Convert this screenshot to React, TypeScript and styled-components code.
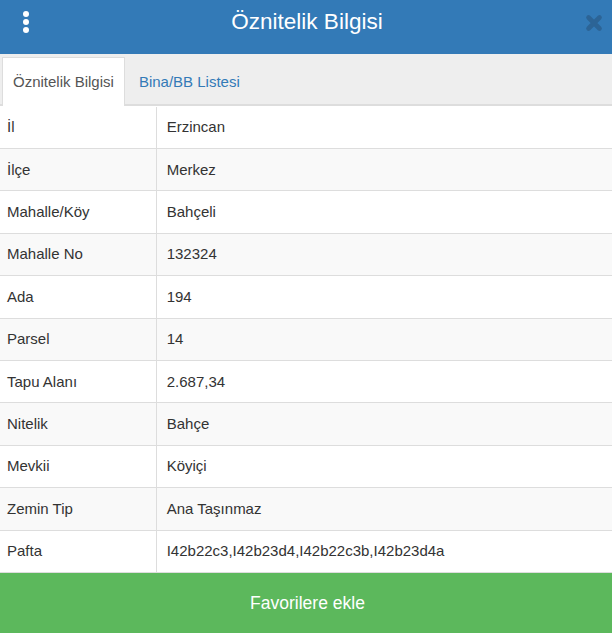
import React from "react";
import styled, { createGlobalStyle } from "styled-components";

const Global = createGlobalStyle`
  html, body { margin: 0; padding: 0; background: #fff; }
  body { font-family: "Liberation Sans", Arial, sans-serif; font-size: 15px; color: #333; overflow: hidden; }
  * { box-sizing: border-box; }
`;

const Page = styled.div`
  width: 612px;
  height: 633px;
  display: flex;
  flex-direction: column;
`;

const Header = styled.header`
  height: 54px;
  background: #337ab7;
  display: grid;
  grid-template-columns: 52px 1fr 52px;
  align-items: start;
  color: #fff;
`;

const MenuButton = styled.div`
  display: flex;
  flex-direction: column;
  gap: 2px;
  padding: 11px 0 0 23px;
`;

const Dot = styled.span`
  width: 6px;
  height: 6px;
  border-radius: 50%;
  background: #fff;
`;

const Title = styled.h1`
  margin: 0;
  padding: 8px 0 0 2px;
  font-size: 22.5px;
  line-height: 28px;
  font-weight: 400;
  text-align: center;
`;

const CloseButton = styled.div`
  padding: 14px 0 0 25px;
  display: flex;
`;

const Tabs = styled.nav`
  height: 52px;
  background: #eee;
  border-bottom: 2px solid #ddd;
  display: flex;
  align-items: flex-end;
  padding-left: 2px;
`;

const Tab = styled.div<{ $active?: boolean }>`
  height: 49px;
  margin-bottom: -2px;
  padding: 0 ${(p) => (p.$active ? "10px" : "13px")} 1px;
  display: flex;
  align-items: center;
  font-size: 15px;
  color: ${(p) => (p.$active ? "#555" : "#337ab7")};
  background: ${(p) => (p.$active ? "#fff" : "transparent")};
  border: 1px solid ${(p) => (p.$active ? "#ddd" : "transparent")};
  border-bottom: none;
`;

const Table = styled.div`
  flex: 1;
  display: flex;
  flex-direction: column;
  padding-top: 0.5px;
`;

const Row = styled.div<{ $odd: boolean }>`
  flex: 1;
  display: grid;
  grid-template-columns: 157px 1fr;
  background: ${(p) => (p.$odd ? "#fff" : "#f9f9f9")};
  border-bottom: 1px solid #ddd;
`;

const Label = styled.div`
  padding: 0 0 1px 7px;
  display: flex;
  align-items: center;
  border-right: 1px solid #ddd;
`;

const Value = styled.div`
  padding: 0 0 1px 9.7px;
  display: flex;
  align-items: center;
`;

const Save = styled.button`
  height: 60px;
  flex: none;
  border: none;
  background: #5cb85c;
  color: #fff;
  font-family: inherit;
  font-size: 17.5px;
  padding: 0 0 0 3px;
`;

const rows: [string, string][] = [
  ["İl", "Erzincan"],
  ["İlçe", "Merkez"],
  ["Mahalle/Köy", "Bahçeli"],
  ["Mahalle No", "132324"],
  ["Ada", "194"],
  ["Parsel", "14"],
  ["Tapu Alanı", "2.687,34"],
  ["Nitelik", "Bahçe"],
  ["Mevkii", "Köyiçi"],
  ["Zemin Tip", "Ana Taşınmaz"],
  ["Pafta", "I42b22c3,I42b23d4,I42b22c3b,I42b23d4a"],
];

export default function App() {
  return (
    <Page>
      <Global />
      <Header>
        <MenuButton>
          <Dot />
          <Dot />
          <Dot />
        </MenuButton>
        <Title>Öznitelik Bilgisi</Title>
        <CloseButton>
          <svg width="18" height="18" viewBox="0 0 18 18">
            <path d="M3.5 3.5 L14.5 14.5 M14.5 3.5 L3.5 14.5" stroke="#2c6496" strokeWidth="4.6" strokeLinecap="round" />
          </svg>
        </CloseButton>
      </Header>
      <Tabs>
        <Tab $active>Öznitelik Bilgisi</Tab>
        <Tab>Bina/BB Listesi</Tab>
      </Tabs>
      <Table>
        {rows.map(([k, v], i) => (
          <Row key={k} $odd={i % 2 === 0}>
            <Label>{k}</Label>
            <Value>{v}</Value>
          </Row>
        ))}
      </Table>
      <Save>Favorilere ekle</Save>
    </Page>
  );
}
